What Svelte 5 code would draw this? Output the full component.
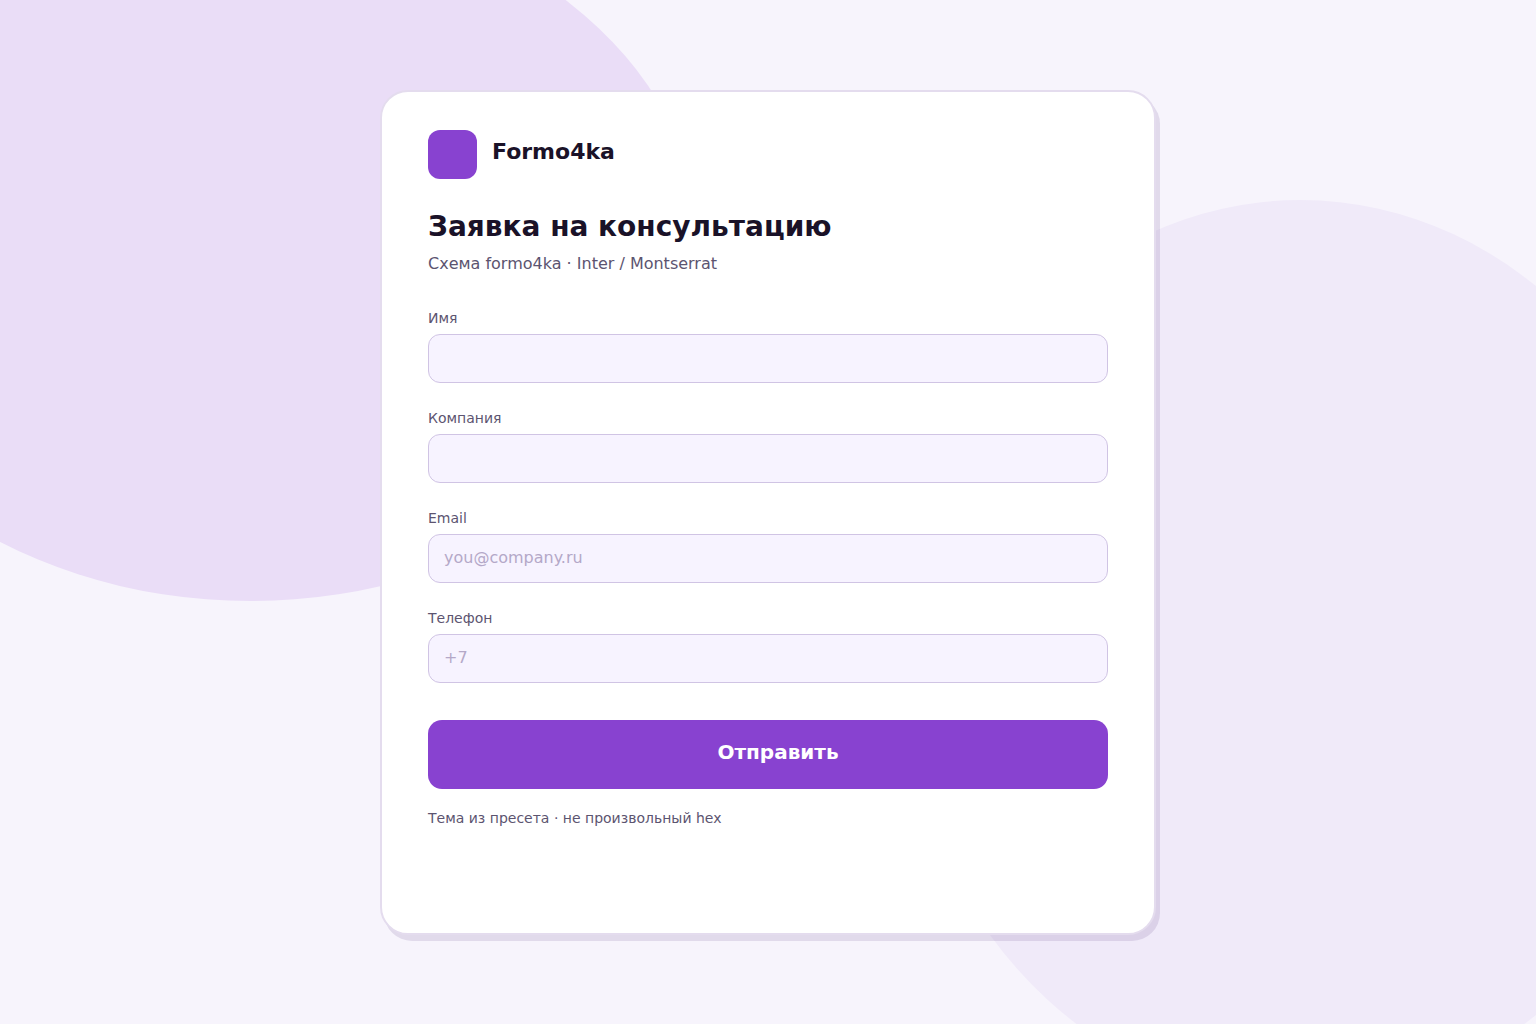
<script>
    const fields = [
        { id: "name", label: "Имя", type: "text", placeholder: "" },
        { id: "company", label: "Компания", type: "text", placeholder: "" },
        { id: "email", label: "Email", type: "email", placeholder: "you@company.ru" },
        { id: "phone", label: "Телефон", type: "tel", placeholder: "+7" },
    ];

    let values = $state({ name: "", company: "", email: "", phone: "" });

    function handleSubmit(event) {
        event.preventDefault();
    }
</script>

<main class="page">
    <div class="blob blob-left"></div>
    <div class="blob blob-right"></div>

    <section class="card">
        <header class="brand">
            <span class="logo"></span>
            <span class="brand-name">Formo4ka</span>
        </header>

        <h1>Заявка на консультацию</h1>
        <p class="subtitle">Схема formo4ka · Inter / Montserrat</p>

        <form onsubmit={handleSubmit}>
            {#each fields as field}
                <div class="form-group">
                    <label for={field.id}>{field.label}</label>
                    <input
                        id={field.id}
                        type={field.type}
                        placeholder={field.placeholder}
                        bind:value={values[field.id]}
                    />
                </div>
            {/each}
            <button type="submit" class="submit-button">Отправить</button>
        </form>

        <p class="note">Тема из пресета · не произвольный hex</p>
    </section>
</main>

<style>
    :global(body) {
        margin: 0;
        background: #f7f4fc;
    }
    .page {
        position: relative;
        box-sizing: border-box;
        min-height: 100vh;
        padding: 90px 24px 88px;
        overflow: hidden;
        font-family: "DejaVu Sans", Verdana, sans-serif;
        color: #1a1228;
    }

    /* background shapes */
    .blob {
        position: absolute;
        border-radius: 50%;
    }
    .blob-left {
        top: -100px;
        left: -200px;
        width: 901px;
        height: 701px;
        background: #eaddf7;
    }
    .blob-right {
        top: 200px;
        right: -165px;
        width: 801px;
        height: 901px;
        background: #f0eaf9;
    }

    .card {
        position: relative;
        box-sizing: border-box;
        max-width: 776px;
        margin: 0 auto;
        padding: 38px 46px 105px;
        background: #fff;
        border: 2px solid #e4dcee;
        border-radius: 28px;
        box-shadow: 4px 6px 0 rgba(80, 50, 120, 0.13);
    }
    .brand {
        display: flex;
        align-items: flex-start;
        gap: 15px;
        margin-bottom: 31px;
    }
    .logo {
        width: 49px;
        height: 49px;
        border-radius: 12px;
        background: #8842d0;
    }
    .brand-name {
        font-size: 22px;
        font-weight: 700;
        line-height: 44px;
    }
    h1 {
        margin: 0 0 8px;
        font-size: 28px;
        font-weight: 700;
        line-height: 34px;
    }
    .subtitle {
        margin: 0 0 32px;
        font-size: 16px;
        line-height: 24px;
        color: #5c5470;
    }
    .form-group {
        display: flex;
        flex-direction: column;
        gap: 6px;
        margin-bottom: 25px;
    }
    label,
    .note {
        font-size: 14px;
        line-height: 20px;
        color: #5c5470;
    }
    input {
        box-sizing: border-box;
        width: 100%;
        height: 49px;
        padding: 0 15px 2px;
        border: 1px solid #d0c4e4;
        border-radius: 12px;
        background: #f7f3ff;
        font-family: inherit;
        font-size: 16px;
        color: #1a1228;
    }
    input::placeholder {
        color: #b4a8c8;
        opacity: 1;
    }
    .submit-button {
        display: block;
        width: 100%;
        height: 69px;
        margin-top: 37px;
        padding: 0 0 6px 20px;
        border: none;
        border-radius: 14px;
        background: #8842d0;
        font-family: inherit;
        font-size: 20px;
        font-weight: 700;
        color: #fff;
        cursor: pointer;
    }
    .note {
        margin: 19px 0 0;
    }
</style>
